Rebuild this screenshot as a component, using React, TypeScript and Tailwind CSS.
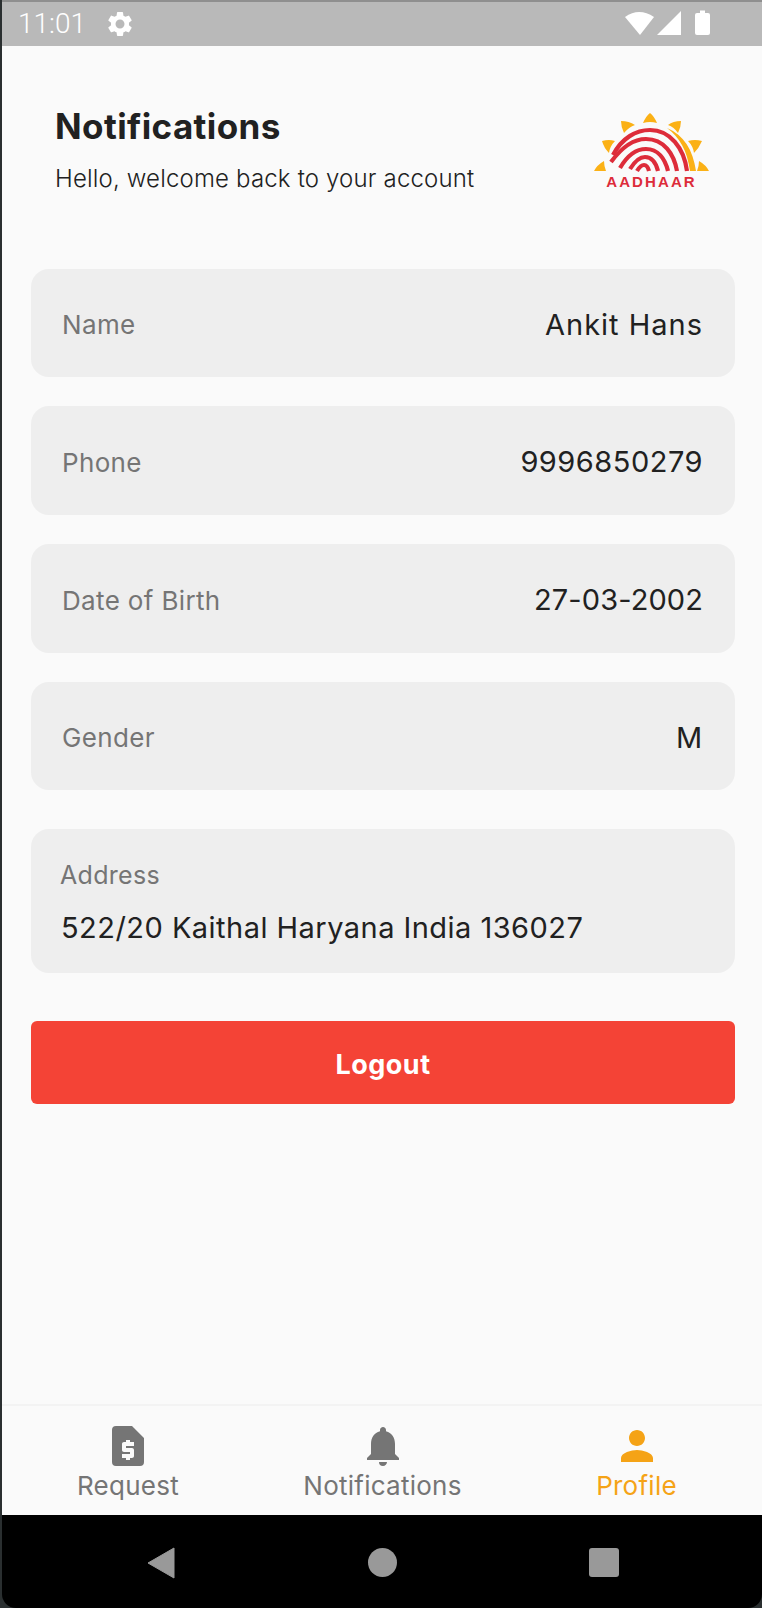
import type { ReactNode } from 'react';
import { MdSettings, MdNotifications, MdPerson } from 'react-icons/md';

const FONT = "font-['Inter','Noto_Sans',sans-serif]";

const rows = [
  { label: 'Name', value: 'Ankit Hans', h: 'h-[108px]', track: 'tracking-[1px]' },
  { label: 'Phone', value: '9996850279', h: 'h-[109px]', track: 'tracking-[0.5px]' },
  { label: 'Date of Birth', value: '27-03-2002', h: 'h-[109px]', track: 'tracking-[0.1px]' },
  { label: 'Gender', value: 'M', h: 'h-[108px]', track: 'tracking-[0.7px]' },
];

// Aadhaar sun and fingerprint
function AadhaarLogo() {
  const rays = [
    'M63 23 Q66 16 70 13 Q74 16 77 23 Q70 21 63 23Z',
    'M41 21 Q49 21 55 25 Q49 27 44 33 Q41 27 41 21Z',
    'M101 21 Q93 21 88 25 Q94 27 98 33 Q101 27 101 21Z',
    'M22 41 Q29 39 35 41 Q30 46 29 53 Q24 48 22 41Z',
    'M122 41 Q115 39 108 41 Q113 46 114 53 Q119 48 122 41Z',
    'M14 71 Q17 65 24 61 Q24 66 26 71Z',
    'M129 71 Q126 65 119 61 Q119 66 117 71Z',
  ];
  const arcs = [
    'M33 55 C42 38 56 30 70 30 C90 30 104 48 107 71',
    'M31 62 C42 47 54 39 66 39 C84 39 94 54 97 71',
    'M40 68 C47 56 56 49 66 49 C78 49 85 59 88 71',
    'M50 69 C55 61 60 57 65 57 C72 57 76 63 78 71',
    'M57 71 C60 66 62 65 64 65 C66 65 68 67 69 71',
  ];
  return (
    <svg width="140" height="100" viewBox="0 0 140 100" className="shrink-0">
      {rays.map((d) => (
        <path key={d} d={d} fill="#fbb116" />
      ))}
      <path d="M87 28 C104 35 113 50 116 71 L110 71 C107 50 100 38 87 28Z" fill="#fbb116" />
      {arcs.map((d) => (
        <path key={d} d={d} fill="none" stroke="#dd2c3a" strokeWidth="4.2" />
      ))}
      <text x="71.5" y="86.5" textAnchor="middle" fill="#dd2c3a" fontSize="15" fontWeight="700" letterSpacing="2.1" fontFamily="Liberation Sans, sans-serif">
        AADHAAR
      </text>
    </svg>
  );
}

function StatusBar() {
  return (
    <div className="h-[46px] bg-[#b9b9b9] flex items-center justify-between pl-[16px] pr-[52px] border-t-2 border-[#8f8f8f]">
      <div className="flex items-center gap-[22px]">
        <span className="font-['Roboto',sans-serif] font-light text-[28px] leading-none text-white">11:01</span>
        <MdSettings className="text-white w-[30px] h-[30px] -ml-[3px]" />
      </div>
      <svg width="85" height="26" viewBox="0 0 85 26" fill="#fff" className="-mt-[2px]">
        <path d="M0 7 Q14 -3 29 7 L15 25Z" />
        <path d="M32 25 L56 1 V25Z" />
        <path d="M70 5 Q70 3 72 3 H75 V0.5 H80 V3 H83 Q85 3 85 5 V23 Q85 25 83 25 H72 Q70 25 70 23Z" />
      </svg>
    </div>
  );
}

function RequestIcon() {
  return (
    <svg viewBox="0 0 24 24" className="w-[48px] h-[48px]" fill="currentColor" fillRule="evenodd">
      <path d="M6 2h8l6 6v12a2 2 0 0 1-2 2H6a2 2 0 0 1-2-2V4a2 2 0 0 1 2-2zM15 12h-4v1h3c.55 0 1 .45 1 1v3c0 .55-.45 1-1 1h-1v1h-2v-1H9v-2h4v-1h-3c-.55 0-1-.45-1-1v-3c0-.55.45-1 1-1h1V9h2v1h2v2z" />
    </svg>
  );
}

function NavItem({ icon, label, active }: { icon: ReactNode; label: string; active?: boolean }) {
  return (
    <div className={`flex flex-col items-center ${active ? 'text-[#f5a316]' : 'text-[#757575]'}`}>
      {icon}
      <span className="mt-[1px] text-[26px] leading-[30px] tracking-[0.25px]">{label}</span>
    </div>
  );
}

export default function App() {
  return (
    <div className={`${FONT} w-[762px] h-[1608px] bg-[#2a2f30] pl-[2px] flex flex-col overflow-hidden`}>
      <StatusBar />
      <div className="flex-1 bg-[#fafafa] flex flex-col">
        <div className="flex items-start justify-between pl-[53px] pr-[42px] pt-[54px] h-[223px]">
          <div>
            <h1 className="mt-[1px] text-[35px] leading-[50px] font-bold tracking-[0.4px] text-[#212121]">Notifications</h1>
            <p className="mt-[13px] text-[24px] leading-[30px] font-light tracking-[0.17px] text-[#212121]">Hello, welcome back to your account</p>
          </div>
          <AadhaarLogo />
        </div>

        <div className="flex flex-col gap-[29px] pl-[29px] pr-[27px]">
          {rows.map((row) => (
            <div key={row.label} className={`${row.h} bg-[#eeeeee] rounded-[18px] flex items-center justify-between pl-[31px] pr-[32px] pt-[3px]`}>
              <span className="text-[26px] tracking-[0.35px] text-[#757575]">{row.label}</span>
              <span className={`text-[29px] ${row.track} text-[#212121]`}>{row.value}</span>
            </div>
          ))}
        </div>

        <div className="mt-[39px] ml-[29px] mr-[27px] h-[144px] bg-[#eeeeee] rounded-[18px] pl-[29px] pt-[32px]">
          <div className="text-[25px] leading-[28px] tracking-[0.3px] text-[#757575]">Address</div>
          <div className="mt-[22px] ml-[1px] text-[29px] leading-[34px] tracking-[0.47px] text-[#212121]">522/20 Kaithal Haryana India 136027</div>
        </div>

        <div className="mt-[48px] ml-[29px] mr-[27px] h-[83px] pt-[5px] bg-[#f44336] rounded-[6px] flex items-center justify-center text-white font-bold text-[27px] tracking-[0.5px]">
          Logout
        </div>

        <div className="mt-auto h-[111px] border-t-2 border-[#f3f3f3] pt-[16px]">
          <div className="grid grid-cols-[254px_255px_253px] -ml-[1px]">
            <NavItem label="Request" icon={<RequestIcon />} />
            <NavItem label="Notifications" icon={<MdNotifications className="w-[48px] h-[48px]" />} />
            <NavItem label="Profile" active icon={<MdPerson className="w-[48px] h-[48px]" />} />
          </div>
        </div>
      </div>

      <div className="h-[93px] bg-black rounded-b-[14px] flex items-center justify-between pl-[145px] pr-[143px] pt-[2px]">
        <svg width="28" height="32" viewBox="0 0 28 32" fill="#999">
          <path d="M1 16 L27 1 V31Z" stroke="#999" strokeWidth="1" strokeLinejoin="round" />
        </svg>
        <div className="w-[29px] h-[29px] rounded-full bg-[#999]" />
        <div className="w-[30px] h-[29px] rounded-[3px] bg-[#999]" />
      </div>
    </div>
  );
}
